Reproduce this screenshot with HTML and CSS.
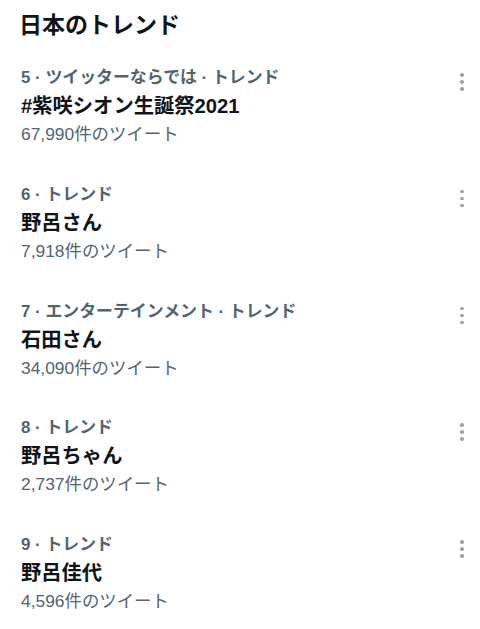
FILE: index.html
```html
<!DOCTYPE html>
<html lang="ja">
<head>
<meta charset="utf-8">
<link rel="stylesheet" href="styles.css">
</head>
<body>
<div class="page">
  <h1 class="title">日本のトレンド</h1>
  <div class="trend">
    <div class="info">
      <div class="cat">5 · ツイッターならでは · トレンド</div>
      <div class="name">#紫咲シオン生誕祭2021</div>
      <div class="count">67,990件のツイート</div>
    </div>
    <div class="more"><span></span><span></span><span></span></div>
  </div>
  <div class="trend">
    <div class="info">
      <div class="cat">6 · トレンド</div>
      <div class="name">野呂さん</div>
      <div class="count">7,918件のツイート</div>
    </div>
    <div class="more"><span></span><span></span><span></span></div>
  </div>
  <div class="trend">
    <div class="info">
      <div class="cat">7 · エンターテインメント · トレンド</div>
      <div class="name">石田さん</div>
      <div class="count">34,090件のツイート</div>
    </div>
    <div class="more"><span></span><span></span><span></span></div>
  </div>
  <div class="trend">
    <div class="info">
      <div class="cat">8 · トレンド</div>
      <div class="name">野呂ちゃん</div>
      <div class="count">2,737件のツイート</div>
    </div>
    <div class="more"><span></span><span></span><span></span></div>
  </div>
  <div class="trend">
    <div class="info">
      <div class="cat">9 · トレンド</div>
      <div class="name">野呂佳代</div>
      <div class="count">4,596件のツイート</div>
    </div>
    <div class="more"><span></span><span></span><span></span></div>
  </div>
</div>
</body>
</html>
```

FILE: styles.css
```css
html, body {
  margin: 0;
  padding: 0;
  background: #ffffff;
}
body {
  font-family: "Liberation Sans", "Noto Sans CJK JP", sans-serif;
  color: #0f1419;
}
.page {
  width: 480px;
}
.title {
  margin: 0;
  padding: 0 0 0 19px;
  height: 48px;
  line-height: 50px;
  font-size: 23px;
  font-weight: 700;
}
.trend {
  display: flex;
  align-items: flex-start;
  padding: 16px 0 16.75px 21px;
}
.info {
  flex: 1;
}
.cat {
  font-size: 16.9px;
  line-height: 28px;
  font-weight: 700;
  color: #536471;
}
.name {
  font-size: 20.3px;
  line-height: 28px;
  font-weight: 700;
  color: #0f1419;
}
.count {
  font-size: 17.4px;
  line-height: 28px;
  color: #536471;
}
.more {
  width: 4px;
  margin: 9px 16px 0 0;
  display: flex;
  flex-direction: column;
  gap: 3.5px;
}
.more span {
  display: block;
  width: 3.5px;
  height: 3.5px;
  border-radius: 50%;
  background: #9aa4ad;
}
```
